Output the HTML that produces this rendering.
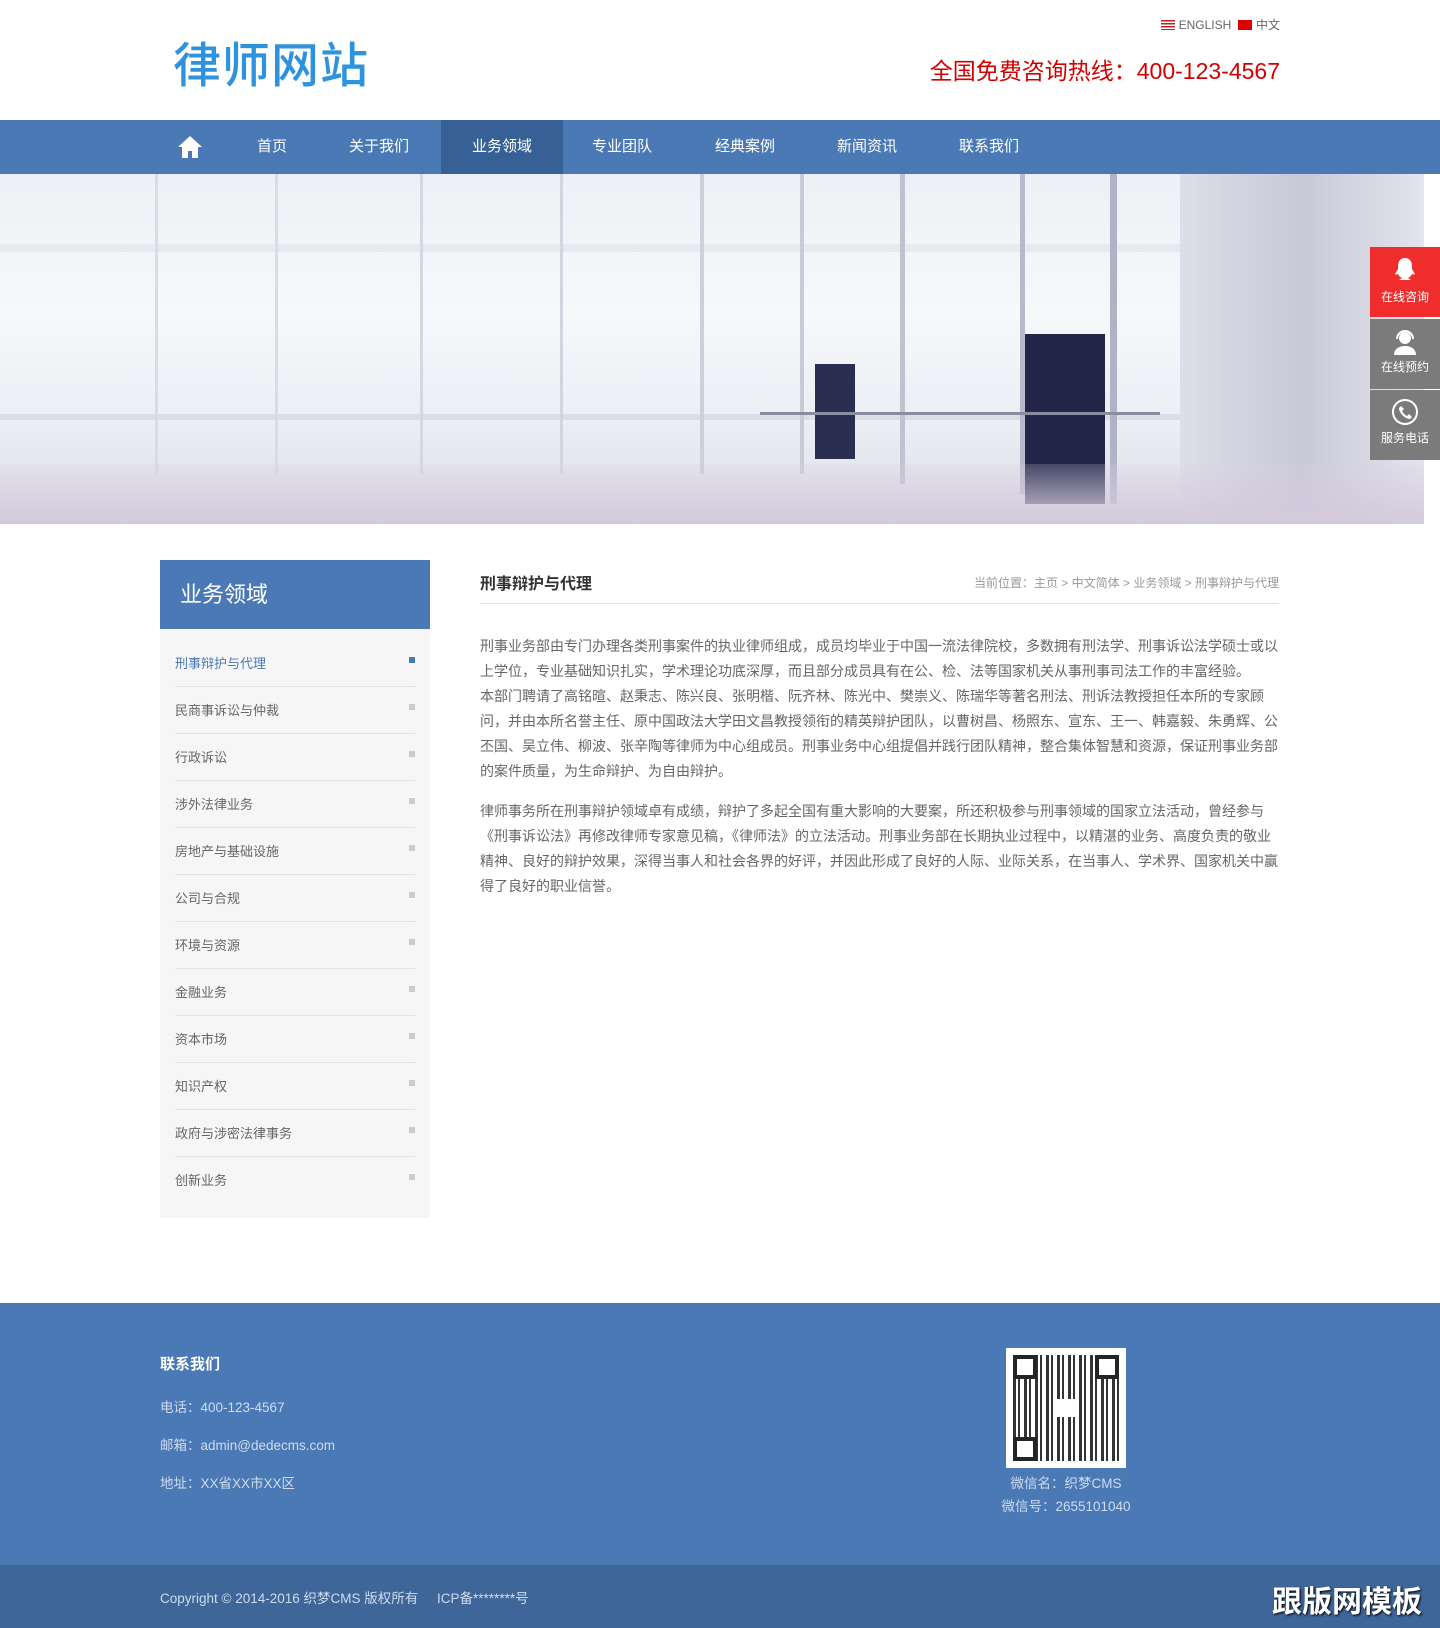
<!DOCTYPE html>
<html><head><meta charset="utf-8">
<style>
*{margin:0;padding:0;box-sizing:border-box}
body{width:1440px;height:1628px;position:relative;background:#fff;font-family:"Liberation Sans","Noto Sans CJK SC",sans-serif;overflow:hidden}
.abs{position:absolute}
.logo{left:173px;top:26px;font-size:48px;color:#2e93dc;letter-spacing:1px;font-weight:500}
.lang{right:160px;top:16px;font-size:12px;color:#666}
.flag{display:inline-block;width:14px;height:10px;vertical-align:-1px;margin-right:4px}
.tel{right:160px;top:52px;font-size:23px;color:#d40000}
.nav{left:0;top:120px;width:1440px;height:54px;background:#4a79b5}
.nav a{position:absolute;top:0;height:54px;line-height:54px;color:#fff;font-size:15px;text-align:center;width:122px}
.banner{left:0;top:174px;width:1424px;height:350px;background:linear-gradient(180deg,#eef0f5 0%,#f7f8fb 40%,#eceef4 70%,#dcdde8 100%);overflow:hidden}
.side{left:160px;top:560px;width:270px;height:658px;background:#f6f6f6}
.sideh{left:160px;top:560px;width:270px;height:69px;background:#4a79b5;color:#fff;font-size:22px;line-height:69px;padding-left:20px}
.item{position:absolute;left:15px;width:240px;height:47px;line-height:47px;font-size:13px;color:#666;border-bottom:1px solid #e2e2e2}
.item i{position:absolute;right:0;top:17px;width:6px;height:6px;background:#ccc}
.ct{left:480px;top:570px;width:799px;font-size:16px;color:#333;font-weight:bold}
.bc{right:161px;top:574px;font-size:12px;color:#999}
.hr{left:480px;top:603px;width:799px;height:1px;background:#e2e2e2}
.txt{left:480px;top:634px;width:800px;font-size:14px;color:#666;line-height:25px}
.footer{left:0;top:1303px;width:1440px;height:262px;background:#4a79b5}
.fbot{left:0;top:1565px;width:1440px;height:63px;background:#3f6698}
.ff{color:#cddcf0;font-size:13.5px}
.float{left:1370px;width:70px;height:70px;color:#fff;font-size:12px;text-align:center}
</style></head><body>
<div class="abs logo">律师网站</div>
<div class="abs lang"><span class="flag" style="background:repeating-linear-gradient(#b22 0 1.5px,#fff 1.5px 3px)"></span>ENGLISH &nbsp;<span class="flag" style="background:#d00"></span>中文</div>
<div class="abs tel">全国免费咨询热线：400-123-4567</div>
<div class="abs nav">
 <svg style="position:absolute;left:178px;top:16px" width="24" height="22" viewBox="0 0 24 22"><path d="M12 0L0 11h4v11h6v-7h4v7h6V11h4z" fill="#fff"/></svg>
 <a style="left:211px">首页</a><a style="left:318px">关于我们</a>
 <a style="left:441px;background:#376097">业务领域</a>
 <a style="left:561px">专业团队</a><a style="left:684px">经典案例</a><a style="left:806px">新闻资讯</a><a style="left:928px">联系我们</a>
</div>
<div class="abs banner">
 <div class="abs" style="left:0;top:70px;width:1424px;height:8px;background:#e8e9ef"></div>
 <div class="abs" style="left:0;top:240px;width:1424px;height:6px;background:#dcdde5"></div>
 <div class="abs" style="left:1180px;top:0;width:244px;height:350px;background:linear-gradient(90deg,#dedee8,#c8c8d8,#e4e4ee)"></div>
 <div class="abs" style="left:155px;top:0;width:3px;height:300px;background:#dadbe3"></div>
 <div class="abs" style="left:275px;top:0;width:3px;height:300px;background:#dadbe3"></div>
 <div class="abs" style="left:420px;top:0;width:3px;height:300px;background:#d6d7e0"></div>
 <div class="abs" style="left:560px;top:0;width:3px;height:300px;background:#d3d5de"></div>
 <div class="abs" style="left:700px;top:0;width:4px;height:300px;background:#cdcfd9"></div>
 <div class="abs" style="left:800px;top:0;width:4px;height:300px;background:#c8cad6"></div>
 <div class="abs" style="left:900px;top:0;width:5px;height:310px;background:#c0c2d0"></div>
 <div class="abs" style="left:1020px;top:0;width:5px;height:320px;background:#b8bacb"></div>
 <div class="abs" style="left:1110px;top:0;width:7px;height:330px;background:#b0b2c5"></div>
 <div class="abs" style="left:815px;top:190px;width:40px;height:95px;background:#2a2f52"></div>
 <div class="abs" style="left:1025px;top:160px;width:80px;height:170px;background:#22274a"></div>
 <div class="abs" style="left:760px;top:238px;width:400px;height:3px;background:#8a8ca0"></div>
 <div class="abs" style="left:0;top:290px;width:1424px;height:60px;background:linear-gradient(180deg,rgba(220,210,228,.2),#d4cadc)"></div>
</div>
<div class="abs float" style="top:247px;background:#f02d2d"><svg style="margin-top:10px" width="24" height="26" viewBox="0 0 24 26"><path d="M12 1c-5 0-7 4-7 8v3l-3 5c1 1 3 0 3 0 1 2 2 3 4 4l-3 2h12l-3-2c2-1 3-2 4-4 0 0 2 1 3 0l-3-5V9c0-4-2-8-7-8z" fill="#fff"/></svg><div style="margin-top:2px">在线咨询</div></div>
<div class="abs float" style="top:319px;background:#7b7b7b"><svg style="margin-top:8px" width="26" height="28" viewBox="0 0 26 28"><circle cx="13" cy="11" r="6" fill="#fff"/><path d="M5 12a8 8 0 0116 0" fill="none" stroke="#fff" stroke-width="2"/><path d="M2 28c0-6 5-9 11-9s11 3 11 9z" fill="#fff"/></svg><div>在线预约</div></div>
<div class="abs float" style="top:390px;background:#7b7b7b"><svg style="margin-top:8px" width="28" height="28" viewBox="0 0 28 28"><circle cx="14" cy="14" r="12" fill="none" stroke="#fff" stroke-width="2"/><path d="M10 8l3 3-2 2c1 2 3 4 5 5l2-2 3 3-2 2c-5 0-11-6-11-11z" fill="#fff"/></svg><div>服务电话</div></div>

<div class="abs side">
 <div class="item" style="top:80px;color:#4a79b5">刑事辩护与代理<i style="background:#4a79b5"></i></div>
 <div class="item" style="top:127px">民商事诉讼与仲裁<i></i></div>
 <div class="item" style="top:174px">行政诉讼<i></i></div>
 <div class="item" style="top:221px">涉外法律业务<i></i></div>
 <div class="item" style="top:268px">房地产与基础设施<i></i></div>
 <div class="item" style="top:315px">公司与合规<i></i></div>
 <div class="item" style="top:362px">环境与资源<i></i></div>
 <div class="item" style="top:409px">金融业务<i></i></div>
 <div class="item" style="top:456px">资本市场<i></i></div>
 <div class="item" style="top:503px">知识产权<i></i></div>
 <div class="item" style="top:550px">政府与涉密法律事务<i></i></div>
 <div class="item" style="top:597px;border:none">创新业务<i></i></div>
</div>
<div class="abs sideh">业务领域</div>
<div class="abs ct">刑事辩护与代理</div>
<div class="abs bc">当前位置：主页 &gt; 中文简体 &gt; 业务领域 &gt; 刑事辩护与代理</div>
<div class="abs hr"></div>
<div class="abs txt">
<p>刑事业务部由专门办理各类刑事案件的执业律师组成，成员均毕业于中国一流法律院校，多数拥有刑法学、刑事诉讼法学硕士或以上学位，专业基础知识扎实，学术理论功底深厚，而且部分成员具有在公、检、法等国家机关从事刑事司法工作的丰富经验。<br>本部门聘请了高铭暄、赵秉志、陈兴良、张明楷、阮齐林、陈光中、樊崇义、陈瑞华等著名刑法、刑诉法教授担任本所的专家顾问，并由本所名誉主任、原中国政法大学田文昌教授领衔的精英辩护团队，以曹树昌、杨照东、宣东、王一、韩嘉毅、朱勇辉、公丕国、吴立伟、柳波、张辛陶等律师为中心组成员。刑事业务中心组提倡并践行团队精神，整合集体智慧和资源，保证刑事业务部的案件质量，为生命辩护、为自由辩护。</p>
<p style="margin-top:15px">律师事务所在刑事辩护领域卓有成绩，辩护了多起全国有重大影响的大要案，所还积极参与刑事领域的国家立法活动，曾经参与《刑事诉讼法》再修改律师专家意见稿，《律师法》的立法活动。刑事业务部在长期执业过程中，以精湛的业务、高度负责的敬业精神、良好的辩护效果，深得当事人和社会各界的好评，并因此形成了良好的人际、业际关系，在当事人、学术界、国家机关中赢得了良好的职业信誉。</p>
</div>
<div class="abs footer">
 <div class="abs" style="left:160px;top:50px;color:#fff;font-size:15px;font-weight:bold">联系我们</div>
 <div class="abs ff" style="left:160px;top:93px">电话：400-123-4567</div>
 <div class="abs ff" style="left:160px;top:131px">邮箱：admin@dedecms.com</div>
 <div class="abs ff" style="left:160px;top:169px">地址：XX省XX市XX区</div>
 <div class="abs" style="left:1006px;top:45px;width:120px;height:120px;background:#fff;padding:7px">
  <div style="width:106px;height:106px;background:repeating-linear-gradient(90deg,#111 0 3px,#fff 3px 5px,#111 5px 7px,#fff 7px 11px),#111;opacity:.85;position:relative">
   <div style="position:absolute;left:0;top:0;width:24px;height:24px;border:4px solid #000;background:#fff"></div>
   <div style="position:absolute;right:0;top:0;width:24px;height:24px;border:4px solid #000;background:#fff"></div>
   <div style="position:absolute;left:0;bottom:0;width:24px;height:24px;border:4px solid #000;background:#fff"></div>
   <div style="position:absolute;left:44px;top:44px;width:18px;height:18px;background:#fff"></div>
  </div></div>
 <div class="abs ff" style="left:966px;top:169px;width:200px;text-align:center">微信名：织梦CMS</div>
 <div class="abs ff" style="left:966px;top:192px;width:200px;text-align:center">微信号：2655101040</div>
</div>
<div class="abs fbot"><div class="abs ff" style="left:160px;top:22px">Copyright © 2014-2016 织梦CMS 版权所有 &nbsp;&nbsp;&nbsp; ICP备********号</div>
<div class="abs" style="left:1272px;top:12px;font-size:30px;font-weight:bold;color:#fff;text-shadow:1px 1px 2px #000">跟版网模板</div></div>
</body></html>
